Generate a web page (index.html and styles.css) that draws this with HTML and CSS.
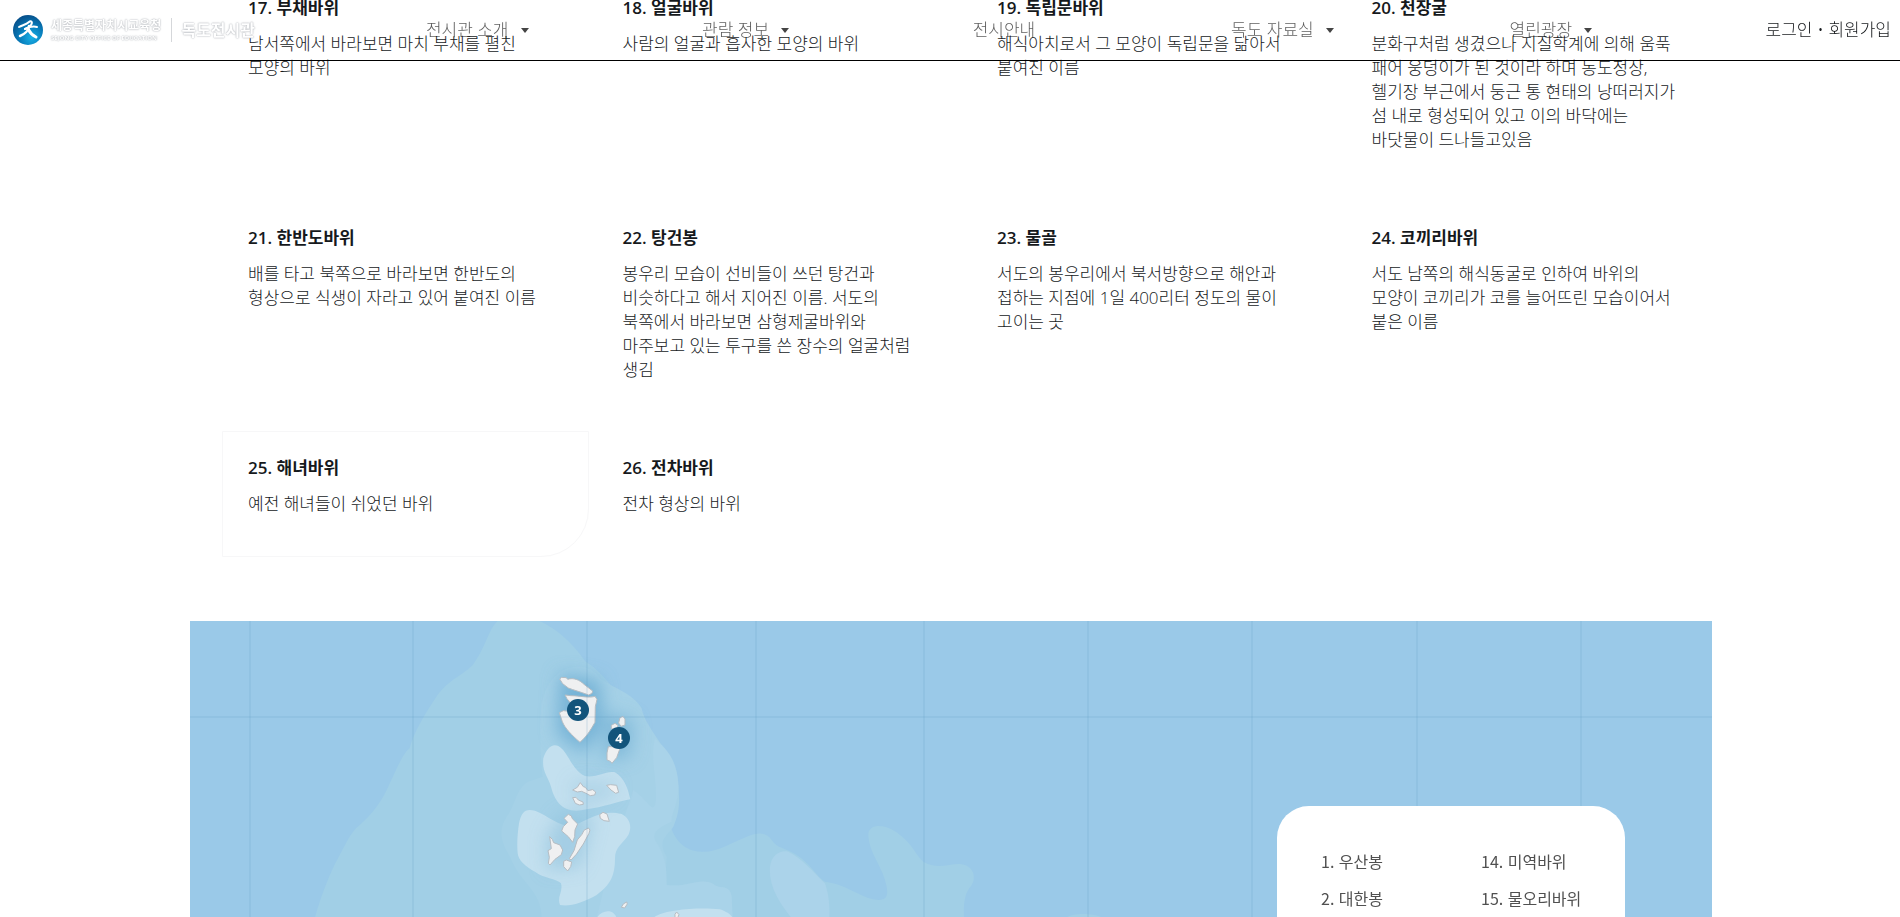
FILE: index.html
```html
<!DOCTYPE html>
<html lang="ko">
<head>
<meta charset="utf-8">
<title>세종특별자치시교육청 독도전시관</title>
<link rel="stylesheet" href="styles.css">
</head>
<body>
<header class="header">
  <a class="brand" href="#">
    <svg class="brand-mark" viewBox="0 0 30 30" aria-hidden="true">
      <defs>
        <radialGradient id="orb" cx="62%" cy="75%" r="75%">
          <stop offset="0" stop-color="#19b0e6"/>
          <stop offset=".5" stop-color="#087fbd"/>
          <stop offset="1" stop-color="#07518c"/>
        </radialGradient>
      </defs>
      <circle cx="15" cy="15" r="15" fill="url(#orb)"/>
      <g fill="none" stroke="#fff" stroke-linecap="round" stroke-linejoin="round">
        <path stroke-width="2" d="M6 12C9 10 13 10 16 7C18 5 20 7 18 10C17 12 15 13 12 14"/>
        <path stroke-width="2" d="M12 14C16 12 20 11 24 12"/>
        <path stroke-width="2.500" d="M16 11C16 15 12 19 7 21"/>
        <path stroke-width="3" d="M15 14C17 18 19 20 23 22"/>
      </g>
    </svg>
    <span class="brand-org"><span class="brand-ko">세종특별자치시교육청</span><span class="brand-en">SEJONG CITY OFFICE OF EDUCATION</span></span>
    <span class="brand-name">독도전시관</span>
  </a>
  <nav class="nav">
    <a class="has-menu" href="#">전시관 소개</a>
    <a class="has-menu" href="#">관람 정보</a>
    <a class="plain" href="#">전시안내</a>
    <a class="has-menu" href="#">독도 자료실</a>
    <a class="has-menu" href="#">열린광장</a>
  </nav>
  <div class="account"><a href="#">로그인</a><span class="dot">•</span><a href="#">회원가입</a></div>
</header>

<main class="page">
  <section class="rocks">
    <article class="rock"><h2>17. 부채바위</h2><p>남서쪽에서 바라보면 마치 부채를 펼친<br>모양의 바위</p></article>
    <article class="rock"><h2>18. 얼굴바위</h2><p>사람의 얼굴과 흡사한 모양의 바위</p></article>
    <article class="rock"><h2>19. 독립문바위</h2><p>해식아치로서 그 모양이 독립문을 닮아서<br>붙여진 이름</p></article>
    <article class="rock"><h2>20. 천장굴</h2><p>분화구처럼 생겼으나 지질학계에 의해 움푹<br>패어 웅덩이가 된 것이라 하며 동도정상,<br>헬기장 부근에서 둥근 통 현태의 낭떠러지가<br>섬 내로 형성되어 있고 이의 바닥에는<br>바닷물이 드나들고있음</p></article>
    <article class="rock"><h2>21. 한반도바위</h2><p>배를 타고 북쪽으로 바라보면 한반도의<br>형상으로 식생이 자라고 있어 붙여진 이름</p></article>
    <article class="rock"><h2>22. 탕건봉</h2><p>봉우리 모습이 선비들이 쓰던 탕건과<br>비슷하다고 해서 지어진 이름. 서도의<br>북쪽에서 바라보면 삼형제굴바위와<br>마주보고 있는 투구를 쓴 장수의 얼굴처럼<br>생김</p></article>
    <article class="rock"><h2>23. 물골</h2><p>서도의 봉우리에서 북서방향으로 해안과<br>접하는 지점에 1일 400리터 정도의 물이<br>고이는 곳</p></article>
    <article class="rock"><h2>24. 코끼리바위</h2><p>서도 남쪽의 해식동굴로 인하여 바위의<br>모양이 코끼리가 코를 늘어뜨린 모습이어서<br>붙은 이름</p></article>
    <article class="rock active"><h2>25. 해녀바위</h2><p>예전 해녀들이 쉬었던 바위</p></article>
    <article class="rock"><h2>26. 전차바위</h2><p>전차 형상의 바위</p></article>
  </section>

  <section class="map">
    <svg class="map-art" viewBox="190 621 1522 296" role="img" aria-label="독도 지도">
      <defs>
        <filter id="haze" x="-50%" y="-50%" width="200%" height="200%"><feGaussianBlur stdDeviation="26"/></filter>
      </defs>
      <rect x="190" y="621" width="1522" height="300" fill="#9ac9e8"/>
      <g fill="#a1cfe6">
        <path transform="translate(180 610) scale(.3827 .3333)" d="M830 33C805 60 800 110 765 165C740 195 700 210 670 260C640 310 610 370 600 415C580 430 550 520 540 540C520 590 490 625 460 655C440 680 430 710 415 740C390 790 365 870 352 925L1362 925L1362 725C1320 725 1290 690 1280 640L1190 300C1130 240 1100 180 1060 155C1020 90 980 55 940 33Z"/>
        <path transform="translate(700 780) scale(.3333)" d="M-2 215C50 220 90 190 130 175C170 155 200 155 215 180C230 205 260 205 290 225C330 250 350 290 375 305C430 310 480 350 520 358C560 365 565 350 560 320C550 260 505 220 505 160C510 130 560 130 600 165C640 195 650 230 670 245C710 270 750 250 780 252C820 255 830 290 815 315C800 335 790 350 792 415L-2 415ZM1100 415C1105 398 1190 398 1210 415Z"/>
      </g>
      <path fill="#abd3ea" transform="translate(700 780) scale(.3333)" d="M210 260C215 225 240 210 265 215C300 230 345 280 375 310C385 340 390 370 388 415L275 415C240 370 205 320 210 260Z"/>
      <g transform="translate(500 650) scale(.3333)">
        <path fill="#a5d1e7" d="M125 160C140 100 160 80 190 60C220 45 270 40 300 85C330 110 400 130 425 175C435 230 500 290 530 370C542 450 540 485 520 530C500 560 470 570 500 620C500 660 490 690 500 705C560 715 600 680 640 702C660 720 690 700 695 740L698 804L125 804C125 720 60 700 30 620C0 570 -5 540 20 500C50 460 50 400 100 390L128 380C118 300 120 220 125 160Z"/>
        <path fill="#a9d3e9" d="M465 265C490 290 530 320 535 400C540 450 510 500 515 515C480 530 455 545 465 570C500 620 500 660 500 705C560 715 600 680 640 702C660 720 690 700 695 740L698 804L290 804L340 600L400 420C450 455 460 500 468 450C470 380 450 320 465 265Z"/>
        <g filter="url(#haze)" fill="#6faed3">
          <path opacity=".85" d="M180 70L300 90L310 230L250 310L170 250Z"/>
          <path opacity=".65" d="M320 190L400 210L390 320L310 330Z"/>
        </g>
        <path fill="#c3e0ef" d="M130 325C140 295 155 280 175 288C205 305 215 360 255 378C290 385 320 360 345 367C375 385 385 420 391 448C350 455 310 472 260 478C190 495 165 455 153 410C145 380 125 365 130 325Z"/>
        <path fill="#c3e0ef" d="M57 520C65 485 75 475 105 482C150 500 175 530 220 528C280 500 310 480 365 492C390 505 397 530 385 555C370 580 345 590 345 625C345 680 330 705 290 735C245 760 210 770 180 765C170 740 190 725 183 700C170 685 130 685 105 665C75 650 55 630 53 610C50 580 53 550 57 520Z"/>
        <g filter="url(#haze)" fill="#86bbda">
          <path opacity=".5" d="M185 490L280 500L240 650L140 660L140 560Z"/>
          <path opacity=".35" d="M215 395L350 400L340 440L230 465Z"/>
        </g>
        <path fill="#c3e0ef" d="M290 804C305 780 340 775 350 804ZM460 804C485 780 590 770 660 778C680 785 695 795 698 804Z"/>
        <g fill="#eff0f1" stroke="#b5bcc2" stroke-width="3" stroke-linejoin="round">
          <path d="M179 87L185 82L199 83L203 88C220 82 240 90 252 103L278 123L276 130L266 135C240 125 220 120 205 114L188 101Z"/>
          <path d="M195 135L212 137C240 137 265 145 285 139L291 148L286 170L285 217C272 240 260 260 240 277C215 255 195 235 187 215L178 188L190 182L206 184L212 160L201 146Z"/>
          <path d="M360 203L369 199L375 207V225L363 229L356 219ZM334 226L345 220L354 226L350 240L334 236ZM325 290H362L350 323L336 340L331 334L321 330V309Z"/>
          <path d="M218 420L232 412L241 398L250 410L256 412L264 422L278 419L287 426L284 435L271 437L258 430L245 424L232 426ZM320 406L332 404L350 406L356 427L347 430L333 420ZM218 443L228 442L235 450L249 456L250 463L238 465L226 460ZM299 494L309 487L321 492L328 514L312 512L301 505Z"/>
          <path d="M192 505L205 493L214 498L217 506L233 522L225 540L224 560L218 577L205 560L185 543L190 530L203 517ZM149 560L157 568L161 578L180 585L188 600L184 614L165 628L150 645L145 640L148 622L144 602L154 596ZM265 534L270 540L267 550L250 582L229 613L213 630L208 626L222 602L232 570L246 553L252 541ZM191 634L199 630L215 636L212 650L203 663L191 650ZM370 762L380 756L382 762L374 774L364 772ZM525 793L530 786L537 794L533 804H525Z"/>
        </g>
      </g>
      <path fill="none" stroke="#4e8fb5" stroke-opacity=".22" d="M250 621V917M413 621V917M587 621V917M756 621V917M924 621V917M1088 621V917M1252 621V917M1417 621V917M1581 621V917M190 717H1712"/>
      <g fill="#12547b"><circle cx="578" cy="710" r="11"/><circle cx="619" cy="738" r="11"/></g>
      <g class="pin-label"><text x="578" y="715">3</text><text x="619" y="743">4</text></g>
    </svg>
    <ul class="legend">
      <li>1. 우산봉</li><li>14. 미역바위</li>
      <li>2. 대한봉</li><li>15. 물오리바위</li>
    </ul>
  </section>
</main>
</body>
</html>
```
FILE: styles.css
```css
* { box-sizing: border-box; }

body {
  margin: 0;
  height: 100vh;
  overflow: hidden;
  background: #fff;
  color: #16191c;
  font-family: "Open Sans", "Noto Sans CJK KR", sans-serif;
  font-size: 17px;
  line-height: 24px;
}

a { color: inherit; text-decoration: none; }

.header {
  position: fixed;
  inset: 0 0 auto;
  z-index: 10;
  display: flex;
  align-items: center;
  height: 61px;
  padding: 0 9px 0 13px;
  border-bottom: 1px solid #000;
}

.brand {
  display: flex;
  align-items: center;
  width: 330px;
  color: #fff;
  font-weight: 700;
  text-shadow: 0 0 2px #a8acb2, 0 0 1px #c0c4c8;
}
.brand-mark { width: 30px; height: 30px; margin-right: 8px; }
.brand-org {
  display: flex;
  flex-direction: column;
  padding-right: 10px;
  border-right: 1px solid #d5d7da;
}
.brand-ko { font-size: 12px; line-height: 16px; }
.brand-en { font-size: 6px; line-height: 8px; }
.brand-name { margin-left: 9px; font-size: 16px; }

.nav {
  flex: 1;
  display: grid;
  grid-template-columns: repeat(5, 1fr);
  justify-items: center;
  color: rgba(0, 0, 0, .65);
  font-weight: 300;
}
.nav a { display: flex; align-items: center; }
.nav .plain { padding-right: 20px; }
.has-menu::after {
  content: "";
  margin-left: 12px;
  border: 4px solid transparent;
  border-top: 5px solid #444;
  border-bottom: 0;
}

.account {
  display: flex;
  justify-content: flex-end;
  gap: 5px;
  width: 206px;
  font-weight: 300;
}
.dot { font-size: 16px; }

.page { margin: -29px 188px 0 190px; }

.rocks {
  display: grid;
  grid-template-columns: repeat(4, 1fr);
  gap: 8px;
  align-items: start;
  padding: 0 0 64px 32px;
}
.rock {
  padding: 24px 0 24px 25px;
  border: 1px solid transparent;
  white-space: nowrap;
}
.rock.active {
  border-color: #f7f7f8;
  border-radius: 0 0 48px 0;
}
.rock h2 {
  margin: 0 0 12px;
  font-size: 17px;
  font-weight: 600;
  line-height: 24px;
}
.rock p { margin: 0 0 16px; font-weight: 300; }

.map { position: relative; }
.map-art { display: block; width: 100%; }
.pin-label {
  fill: #fff;
  font-size: 13px;
  font-weight: 700;
  text-anchor: middle;
}

.legend {
  position: absolute;
  top: 185px;
  right: 87px;
  bottom: 0;
  display: grid;
  grid-template-columns: 160px 1fr;
  grid-auto-rows: 37px;
  width: 348px;
  margin: 0;
  padding: 37px 0 0 44px;
  overflow: hidden;
  border-radius: 32px 32px 0 0;
  background: #fff;
  color: #505050;
  font-family: "Noto Sans CJK KR", sans-serif;
  font-size: 16px;
  line-height: 36px;
  list-style: none;
}
```
